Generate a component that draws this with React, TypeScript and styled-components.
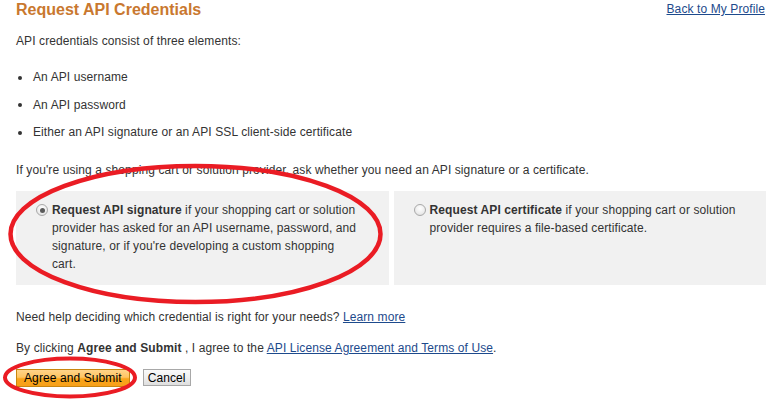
import React from "react";
import styled, { createGlobalStyle } from "styled-components";

const Global = createGlobalStyle`
  html, body { margin: 0; padding: 0; background: #fff; }
  body { font-family: "Liberation Sans", Arial, sans-serif; font-size: 12px; color: #333; letter-spacing: 0.1px; }
`;

const Page = styled.div`
  position: relative;
  width: 777px;
  height: 408px;
  overflow: hidden;
`;

const Content = styled.div`
  width: 750px;
  margin-left: 16px;
  display: flex;
  flex-direction: column;
`;

const Header = styled.div`
  display: flex;
  justify-content: space-between;
  align-items: flex-start;
`;

const Title = styled.h1`
  margin: 0;
  font-size: 16px;
  line-height: 20px;
  font-weight: bold;
  letter-spacing: 0;
  color: #c9782f;
`;

const Link = styled.a`
  color: #1d4a8c;
  text-decoration: underline;
  cursor: pointer;
`;

const HeaderLink = styled(Link)`
  line-height: 18px;
  margin-right: 1px;
`;

const Para = styled.p<{ $top: number }>`
  margin: ${(p) => p.$top}px 0 0;
  line-height: 18px;
`;

const List = styled.ul`
  margin: 18px 0 0;
  padding: 0;
  list-style: none;
  display: flex;
  flex-direction: column;
  gap: 9.5px;
`;

const Item = styled.li`
  display: flex;
  align-items: center;
  line-height: 18px;
  &::before {
    content: "";
    width: 4px;
    height: 4px;
    border-radius: 50%;
    background: #333;
    margin: 1px 11px 0 2px;
  }
`;

const Options = styled.div`
  margin-top: 12px;
  display: grid;
  grid-template-columns: 1fr 1fr;
  gap: 5px;
`;

const Option = styled.label`
  background: #f1f1f1;
  padding: 10px 29.5px 12px 20px;
  display: flex;
  align-items: flex-start;
  gap: 4px;
  min-height: 72px;
`;

const Radio = styled.input.attrs({ type: "radio" })`
  appearance: none;
  -webkit-appearance: none;
  margin: 3px 0 0;
  flex: none;
  width: 12px;
  height: 12px;
  border-radius: 50%;
  border: 1px solid #a9a9a9;
  box-sizing: border-box;
  background: radial-gradient(circle at 50% 35%, #ffffff 0%, #ececec 60%, #d6d6d6 100%);
  display: grid;
  place-items: center;
  &:checked::after {
    content: "";
    width: 5px;
    height: 5px;
    border-radius: 50%;
    background: #5a5a5a;
  }
`;

const OptionText = styled.span`
  line-height: 18px;
`;

const Buttons = styled.div`
  margin-top: 12px;
  display: flex;
  align-items: flex-start;
  gap: 13px;
`;

const Button = styled.button<{ $primary?: boolean }>`
  font-family: "Liberation Sans", Arial, sans-serif;
  font-size: 12px;
  letter-spacing: 0.1px;
  color: #000;
  line-height: 14px;
  margin: 0;
  cursor: pointer;
  padding: ${(p) => (p.$primary ? "1px 7px 1px" : "1px 4px 0")};
  border: 1px solid ${(p) => (p.$primary ? "#c9860f" : "#a8a8a8")};
  background: ${(p) =>
    p.$primary
      ? "linear-gradient(#ffd48a 0%, #ffc562 45%, #f9a51a 55%, #f7a01a 100%)"
      : "linear-gradient(#fafafa 0%, #efefef 50%, #dedede 100%)"};
`;

const Marks = styled.svg`
  position: absolute;
  left: 0;
  top: 0;
  pointer-events: none;
`;

export default function App() {
  return (
    <Page>
      <Global />
      <Content>
        <Header>
          <Title>Request API Credentials</Title>
          <HeaderLink>Back to My Profile</HeaderLink>
        </Header>
        <Para $top={12}>API credentials consist of three elements:</Para>
        <List>
          <Item>An API username</Item>
          <Item>An API password</Item>
          <Item>Either an API signature or an API SSL client-side certificate</Item>
        </List>
        <Para $top={20}>
          If you're using a shopping cart or solution provider, ask whether you need an API signature or a certificate.
        </Para>
        <Options>
          <Option>
            <Radio name="cred" defaultChecked />
            <OptionText>
              <b>Request API signature</b> if your shopping cart or solution provider has asked for an API username,
              password, and signature, or if you're developing a custom shopping cart.
            </OptionText>
          </Option>
          <Option>
            <Radio name="cred" />
            <OptionText>
              <b>Request API certificate</b> if your shopping cart or solution provider requires a file-based
              certificate.
            </OptionText>
          </Option>
        </Options>
        <Para $top={23}>
          Need help deciding which credential is right for your needs? <Link>Learn more</Link>
        </Para>
        <Para $top={13}>
          By clicking <b>Agree and Submit</b> , I agree to the <Link>API License Agreement and Terms of Use</Link>.
        </Para>
        <Buttons>
          <Button $primary>Agree and Submit</Button>
          <Button>Cancel</Button>
        </Buttons>
      </Content>
      <Marks width="777" height="408" viewBox="0 0 777 408">
        <ellipse cx="195.5" cy="234" rx="185" ry="68" fill="none" stroke="#ea1c24" strokeWidth="4.5" />
        <ellipse cx="70" cy="377.5" rx="65" ry="19" fill="none" stroke="#ea1c24" strokeWidth="4" />
      </Marks>
    </Page>
  );
}
